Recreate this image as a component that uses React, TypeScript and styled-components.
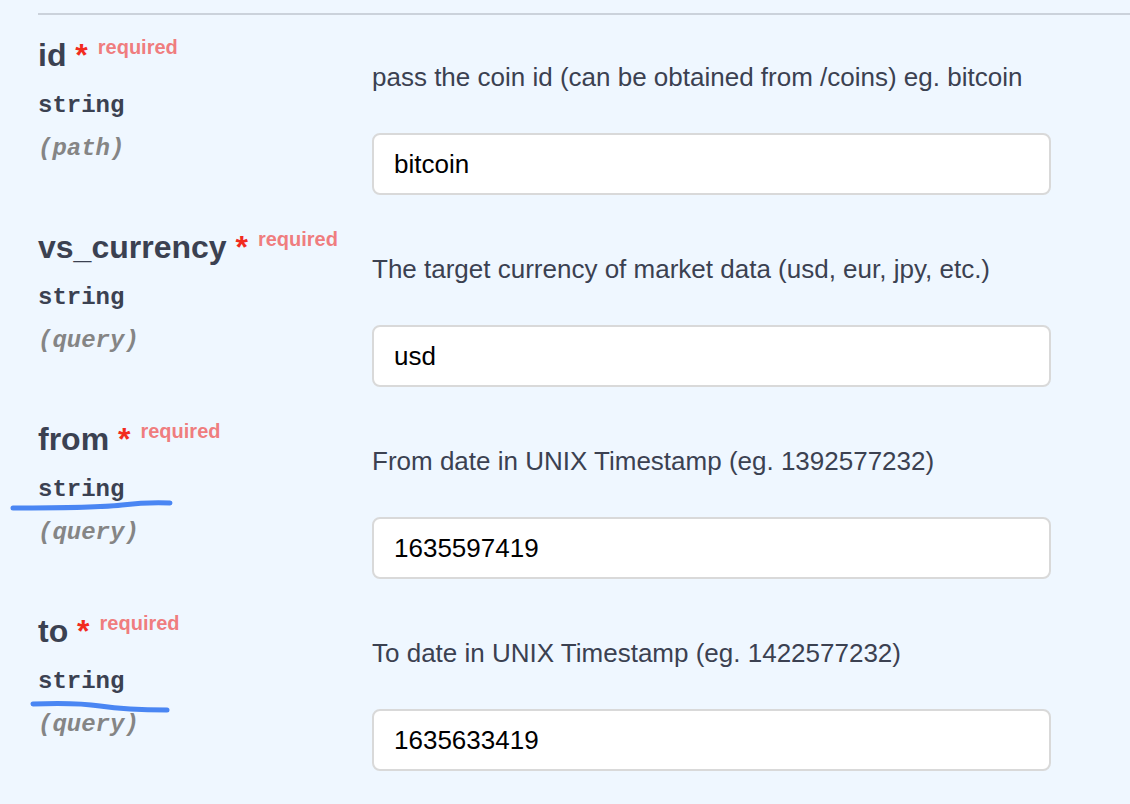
import React from "react";
import styled, { createGlobalStyle } from "styled-components";

const GlobalStyle = createGlobalStyle`
  html, body {
    margin: 0;
    padding: 0;
    background: #eff7ff;
  }
  body {
    font-family: "Liberation Sans", Arial, sans-serif;
    color: #3b4151;
  }
`;

const Page = styled.div`
  width: 1130px;
  height: 804px;
  overflow: hidden;
  padding-top: 13px;
  box-sizing: border-box;
`;

const Table = styled.div`
  margin-left: 38px;
  border-top: 2px solid #cbd2db;
`;

const Row = styled.div`
  display: grid;
  grid-template-columns: 334px 1fr;
  height: 192px;
  padding-top: 20px;
  box-sizing: border-box;
`;

const NameCol = styled.div`
  display: flex;
  flex-direction: column;
`;

const Name = styled.div`
  font-size: 32px;
  line-height: 40px;
  font-weight: 700;
  color: #3b4151;
  white-space: nowrap;
`;

const Star = styled.span`
  color: #f22b1e;
`;

const Required = styled.span`
  position: relative;
  top: -12px;
  padding-left: 10px;
  font-size: 20px;
  font-weight: 700;
  color: rgba(240, 92, 92, 0.8);
`;

const Type = styled.div`
  position: relative;
  padding: 13px 0 15px;
  font-family: "Liberation Mono", "Courier New", monospace;
  font-size: 24px;
  line-height: 28px;
  font-weight: 700;
  color: #3b4151;
`;

const In = styled.div`
  font-family: "Liberation Mono", "Courier New", monospace;
  font-size: 24px;
  line-height: 28px;
  font-weight: 700;
  font-style: italic;
  color: #858585;
`;

// hand-drawn pen stroke under the type label
const Scribble = styled.svg`
  position: absolute;
  left: -38px;
  top: 0;
  width: 200px;
  height: 60px;
  pointer-events: none;
`;

const DescCol = styled.div`
  display: flex;
  flex-direction: column;
`;

const Desc = styled.p`
  margin: 26px 0 40px;
  font-size: 26px;
  line-height: 32px;
  color: #3b4151;
  white-space: nowrap;
`;

const Field = styled.input`
  width: 679px;
  height: 62px;
  box-sizing: border-box;
  padding: 0 20px;
  border: 2px solid #d9d9d9;
  border-radius: 8px;
  background: #fff;
  font-family: "Liberation Sans", Arial, sans-serif;
  font-size: 26px;
  color: #000;
  outline: none;
`;

interface Param {
  name: string;
  location: string;
  description: string;
  value: string;
  mark?: string;
}

const params: Param[] = [
  {
    name: "id",
    location: "path",
    description: "pass the coin id (can be obtained from /coins) eg. bitcoin",
    value: "bitcoin",
  },
  {
    name: "vs_currency",
    location: "query",
    description: "The target currency of market data (usd, eur, jpy, etc.)",
    value: "usd",
  },
  {
    name: "from",
    location: "query",
    description: "From date in UNIX Timestamp (eg. 1392577232)",
    value: "1635597419",
    mark: "M13 45 C 60 45, 105 44, 122 42 S 150 39, 170 40",
  },
  {
    name: "to",
    location: "query",
    description: "To date in UNIX Timestamp (eg. 1422577232)",
    value: "1635633419",
    mark: "M33 49 C 60 48, 80 48, 100 51 S 148 55, 167 55",
  },
];

const ParamRow: React.FC<{ param: Param }> = ({ param }) => (
  <Row>
    <NameCol>
      <Name>
        {param.name}
        <Star>&nbsp;*</Star>
        <Required>required</Required>
      </Name>
      <Type>
        string
        {param.mark && (
          <Scribble viewBox="0 0 200 60">
            <path
              d={param.mark}
              fill="none"
              stroke="#4a86f3"
              strokeWidth="5"
              strokeLinecap="round"
            />
          </Scribble>
        )}
      </Type>
      <In>({param.location})</In>
    </NameCol>
    <DescCol>
      <Desc>{param.description}</Desc>
      <Field defaultValue={param.value} />
    </DescCol>
  </Row>
);

export default function App() {
  return (
    <Page>
      <GlobalStyle />
      <Table>
        {params.map((p) => (
          <ParamRow key={p.name} param={p} />
        ))}
      </Table>
    </Page>
  );
}
